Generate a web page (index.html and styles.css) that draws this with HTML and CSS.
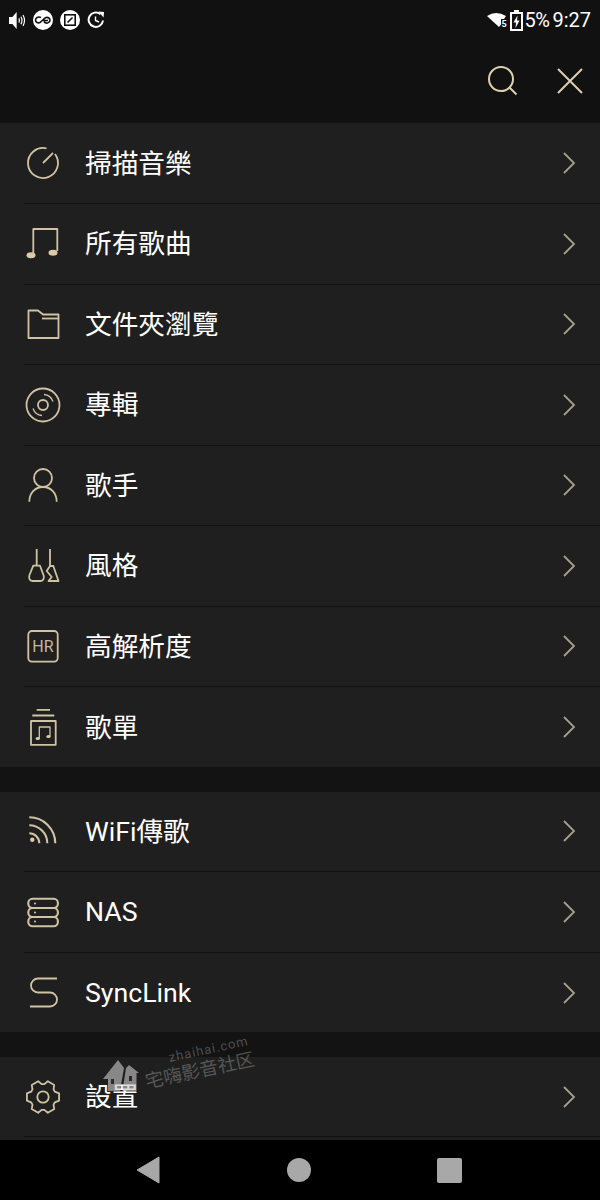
FILE: index.html
```html
<!DOCTYPE html>
<html>
<head>
    <title>Menu</title>
    <link rel="stylesheet" href="styles.css">
</head>
<body>
    <svg class="defs" width="0" height="0">
        <symbol id="chevron" viewBox="0 0 14 24">
            <path d="M2 2 L12 12 L2 22"/>
        </symbol>
    </svg>

    <header class="top">
        <div class="status">
            <div class="status-left">
                <!-- speaker -->
                <svg width="17" height="19" viewBox="0 0 20 22">
                    <path class="solid" d="M0 7 H4 L9 1 V21 L4 15 H0 Z"/>
                    <path class="white-line" d="M11.5 8.5 Q13 11 11.5 13.5 M14 6.5 Q16.5 11 14 15.5 M16.5 4.5 Q20 11 16.5 17.5"/>
                </svg>
                <!-- voicemail badge -->
                <svg width="20" height="20" viewBox="0 0 20 20">
                    <circle class="solid" cx="10" cy="10" r="10"/>
                    <path class="dark-line" d="M8 7.5 C5 6 2.5 8 2.5 10 C2.5 12.5 5 13.5 7 12.5 C9 11.5 10.5 8.5 13 7.5 C15 7 17 8.5 17 10 C17 12 15 13.5 13 13 C11.5 12.5 11 11.5 11 10.5 H15"/>
                </svg>
                <!-- nfc badge -->
                <svg width="20" height="20" viewBox="0 0 20 20">
                    <circle class="solid" cx="10" cy="10" r="10"/>
                    <rect class="dark-line" x="4.8" y="4.8" width="10.4" height="10.4"/>
                    <path class="dark-line" d="M7.5 12.5 L12.5 7.5" stroke-width="2.6"/>
                </svg>
                <!-- clock with arrow -->
                <svg width="18" height="18" viewBox="0 0 18 18">
                    <path class="white-line thick" d="M13.5 3.2 A7.2 7.2 0 1 0 16 9.5"/>
                    <path class="solid" d="M11.5 0.5 L17 1 L16.5 6.5 Z"/>
                    <path class="white-line" d="M8.5 5.5 V9.5 L12 11"/>
                </svg>
            </div>
            <div class="status-right">
                <svg width="21" height="18" viewBox="0 0 21 18">
                    <path class="solid" d="M0 5 Q9 -1 19 5 L17 8 H14 V13.5 L12 16 Z"/>
                    <text class="wifi-five" x="14.5" y="15.5">5</text>
                </svg>
                <svg width="13" height="21" viewBox="0 0 13 21">
                    <path class="white-line thick" d="M1 3 H12 V20 H1 Z"/>
                    <rect class="solid" x="4" y="0" width="5" height="3"/>
                    <path class="solid" d="M7.5 5.5 L3.5 12.5 H6 L5.5 18 L9.5 10.5 H7 Z"/>
                </svg>
                <span class="battery-text">5%</span>
                <span class="clock">9:27</span>
            </div>
        </div>
        <div class="toolbar">
            <svg class="tool-icon" width="30" height="30" viewBox="0 0 30 30">
                <circle cx="13" cy="13" r="12"/>
                <path d="M21.5 21.5 L28.5 28.5"/>
            </svg>
            <svg class="tool-icon" width="28" height="28" viewBox="0 0 28 28">
                <path d="M2 2 L26 26 M26 2 L2 26"/>
            </svg>
        </div>
    </header>

    <main>
        <section class="list list-main">
            <div class="row">
                <svg class="icon" viewBox="0 0 40 40">
                    <path d="M23.5 5.4 A15 15 0 1 0 32 11"/>
                    <path d="M20 20 L30 10"/>
                </svg>
                <span class="label">掃描音樂</span>
                <svg class="chevron"><use href="#chevron"/></svg>
            </div>
            <div class="row">
                <svg class="icon" viewBox="0 0 40 40">
                    <path d="M10.3 29 V5 H34.3 V27"/>
                    <ellipse class="fill" cx="8" cy="31.3" rx="4.5" ry="3"/>
                    <ellipse class="fill" cx="30" cy="28.7" rx="4.5" ry="3"/>
                </svg>
                <span class="label">所有歌曲</span>
                <svg class="chevron"><use href="#chevron"/></svg>
            </div>
            <div class="row">
                <svg class="icon" viewBox="0 0 40 40">
                    <path d="M5.5 6.5 H15 L20 10.5 H35.5 V34 H5.5 Z"/>
                    <path d="M19 14.5 H35.5"/>
                </svg>
                <span class="label">文件夾瀏覽</span>
                <svg class="chevron"><use href="#chevron"/></svg>
            </div>
            <div class="row">
                <svg class="icon" viewBox="0 0 40 40">
                    <circle cx="20" cy="20" r="16.5"/>
                    <circle cx="20" cy="20" r="5"/>
                    <path class="thin" d="M21 9.5 A10.5 10.5 0 0 1 30 16.5"/>
                    <path class="thin" d="M19 30.5 A10.5 10.5 0 0 1 10 23.5"/>
                </svg>
                <span class="label">專輯</span>
                <svg class="chevron"><use href="#chevron"/></svg>
            </div>
            <div class="row">
                <svg class="icon" viewBox="0 0 40 40">
                    <circle cx="20" cy="13" r="9"/>
                    <path d="M6.3 36.7 C6.3 28 12 22 20 22 S33.7 28 33.7 36.7"/>
                </svg>
                <span class="label">歌手</span>
                <svg class="chevron"><use href="#chevron"/></svg>
            </div>
            <div class="row">
                <svg class="icon" viewBox="0 0 40 40">
                    <path d="M13.7 3 V19.7 M10.3 19.7 H17 L20.5 29 C21.5 32 20.5 35 17.5 35 H9.5 C6.5 35 5.5 32 6.5 29 Z"/>
                    <path d="M27 3 V20 L23.7 25 L28.7 31 L25.5 35 H35.5 L30.3 20 H27"/>
                </svg>
                <span class="label">風格</span>
                <svg class="chevron"><use href="#chevron"/></svg>
            </div>
            <div class="row">
                <svg class="icon" viewBox="0 0 40 40">
                    <rect x="5.3" y="5" width="29.4" height="30.6" rx="3.5"/>
                    <text class="icon-text" x="20" y="26">HR</text>
                </svg>
                <span class="label">高解析度</span>
                <svg class="chevron"><use href="#chevron"/></svg>
            </div>
            <div class="row">
                <svg class="icon" viewBox="0 0 40 40">
                    <path d="M13.7 2.8 H27 M9.3 8.5 H31.3"/>
                    <rect x="8" y="14" width="24.7" height="23.8"/>
                    <path class="thin" d="M16.3 31 V20 H27 V29"/>
                    <ellipse class="fill" cx="14.8" cy="31.5" rx="2.2" ry="1.5"/>
                    <ellipse class="fill" cx="25.5" cy="29.5" rx="2.2" ry="1.5"/>
                </svg>
                <span class="label">歌單</span>
                <svg class="chevron"><use href="#chevron"/></svg>
            </div>
        </section>

        <section class="list list-mid">
            <div class="row">
                <svg class="icon heavy" viewBox="0 0 40 40">
                    <path d="M6.3 6.3 A26 26 0 0 1 32.3 32.3"/>
                    <path d="M6.3 14.3 A18 18 0 0 1 24.3 32.3"/>
                    <path d="M6.3 22.3 A10 10 0 0 1 16.3 32.3"/>
                    <circle class="fill" cx="9.3" cy="28.7" r="2.2"/>
                </svg>
                <span class="label">WiFi傳歌</span>
                <svg class="chevron"><use href="#chevron"/></svg>
            </div>
            <div class="row">
                <svg class="icon heavy" viewBox="0 0 40 40">
                    <rect x="5.3" y="6.8" width="29.6" height="9.2" rx="4.2"/>
                    <rect x="5.3" y="16" width="29.6" height="9" rx="4.2"/>
                    <rect x="5.3" y="25" width="29.6" height="9.2" rx="4.2"/>
                    <circle class="fill" cx="12" cy="11.4" r="1"/>
                    <circle class="fill" cx="12" cy="20.5" r="1"/>
                    <circle class="fill" cx="12" cy="29.6" r="1"/>
                </svg>
                <span class="label">NAS</span>
                <svg class="chevron"><use href="#chevron"/></svg>
            </div>
            <div class="row">
                <svg class="icon" viewBox="0 0 40 40">
                    <path d="M34 5.5 H15 a7 7 0 0 0 0 14 H27 a7 7 0 0 1 0 14 H7"/>
                </svg>
                <span class="label">SyncLink</span>
                <svg class="chevron"><use href="#chevron"/></svg>
            </div>
        </section>

        <section class="list list-end">
            <div class="row">
                <svg class="icon" viewBox="0 0 40 40">
                    <path d="M31.88 14.71 L36.08 16.29 L36.08 23.71 L31.88 25.29 L30.52 27.64 L31.25 32.07 L24.82 35.78 L21.36 32.93 L18.64 32.93 L15.18 35.78 L8.75 32.07 L9.48 27.64 L8.12 25.29 L3.92 23.71 L3.92 16.29 L8.12 14.71 L9.48 12.36 L8.75 7.93 L15.18 4.22 L18.64 7.07 L21.36 7.07 L24.82 4.22 L31.25 7.93 L30.52 12.36 Z"/>
                    <circle cx="20" cy="20" r="5.7"/>
                </svg>
                <span class="label">設置</span>
                <svg class="chevron"><use href="#chevron"/></svg>
            </div>
        </section>
    </main>

    <nav class="navbar">
        <svg width="24" height="28" viewBox="0 0 24 28">
            <path class="nav-shape" d="M23 1 V27 L1 14 Z"/>
        </svg>
        <span class="nav-circle"></span>
        <span class="nav-square"></span>
    </nav>

    <!-- watermark over the list -->
    <div class="watermark">
        <svg class="watermark-logo" width="38" height="32" viewBox="0 0 38 32">
            <path d="M1 19 L16 0 L22 8 L18 31 H6 V19 Z"/>
            <path d="M20.5 31 L24 8 L27 5 L37 13 H34.5 V31 Z"/>
            <rect class="watermark-hole" x="9" y="19" width="3" height="5"/>
            <rect class="watermark-hole" x="27" y="16" width="3" height="5"/>
        </svg>
        <div class="watermark-text">
            <div class="watermark-url">zhaihai.com</div>
            <div class="watermark-name">宅嗨影音社区</div>
        </div>
    </div>
</body>
</html>
```

FILE: styles.css
```css
* {
    box-sizing: border-box;
}
html, body {
    margin: 0;
    padding: 0;
}
body {
    position: relative;
    width: 600px;
    height: 1200px;
    overflow: hidden;
    background-color: #131313;
    color: white;
    font-family: Roboto, "Noto Sans CJK TC", sans-serif;
}
.defs {
    position: absolute;
}

/* top area */
.top {
    height: 123px;
    background-color: #111111;
}
.status {
    height: 40px;
    display: flex;
    justify-content: space-between;
    align-items: center;
    padding: 0 9px;
}
.status-left {
    display: flex;
    align-items: center;
    gap: 7px;
}
.status-right {
    display: flex;
    align-items: center;
    gap: 2px;
    font-size: 20px;
    line-height: 24px;
}
.battery-text {
    letter-spacing: -0.5px;
}
.clock {
    margin-left: 1px;
}
.solid {
    fill: white;
}
.white-line {
    fill: none;
    stroke: white;
    stroke-width: 1.4;
}
.white-line.thick {
    stroke-width: 2;
}
.dark-line {
    fill: none;
    stroke: #111111;
    stroke-width: 1.6;
}
.wifi-five {
    fill: white;
    font-size: 9px;
    font-weight: 700;
}
.toolbar {
    height: 83px;
    display: flex;
    justify-content: flex-end;
    align-items: center;
    gap: 38px;
    padding: 0 16px 1px 0;
}
.tool-icon {
    fill: none;
    stroke: #ddd0ae;
    stroke-width: 2;
}

/* lists */
.list {
    background-color: #1f1f1f;
}
.list-main {
    height: 644px;
    padding-top: 0.5px;
    margin-bottom: 24.5px;
}
.list-mid {
    height: 240.5px;
    margin-bottom: 25px;
}
.list-end {
    height: 83px;
}
.row {
    height: 80.5px;
    margin-left: 24px;
    padding-right: 24px;
    display: flex;
    align-items: center;
    border-bottom: 1px solid #111111;
}
.list .row:last-child {
    border-bottom: none;
}
.list-end .row:last-child {
    height: 80px;
    border-bottom: 1px solid #111111;
}
.icon {
    width: 40px;
    height: 40px;
    margin-left: -1px;
    flex-shrink: 0;
    fill: none;
    stroke: #d0c3a3;
    stroke-width: 1.8;
    stroke-linejoin: round;
}
.icon.heavy {
    stroke-width: 2.1;
}
.icon .thin {
    stroke-width: 1.3;
}
.icon .fill {
    fill: #dccba6;
    stroke: none;
}
.icon-text {
    fill: #c5b99c;
    stroke: none;
    font-size: 16px;
    text-anchor: middle;
}
.label {
    margin-left: 22px;
    padding-top: 1px;
    flex: 1;
    font-size: 26.7px;
    line-height: 36px;
}
.chevron {
    width: 14px;
    height: 24px;
    fill: none;
    stroke: #a89f8b;
    stroke-width: 1.8;
}

/* android nav */
.navbar {
    height: 60px;
    background-color: black;
    display: flex;
    align-items: center;
    justify-content: space-between;
    padding: 0 138px 0 136px;
}
.nav-shape {
    fill: #a8a8a8;
    stroke: #a8a8a8;
    stroke-linejoin: round;
}
.nav-circle {
    width: 24px;
    height: 24px;
    border-radius: 50%;
    background-color: #a8a8a8;
}
.nav-square {
    width: 25px;
    height: 25px;
    border-radius: 2px;
    background-color: #a8a8a8;
}

/* watermark */
.watermark {
    position: absolute;
    left: 102px;
    top: 1060px;
    display: flex;
}
.watermark-logo {
    fill: rgba(200, 200, 200, 0.62);
}
.watermark-hole {
    fill: #2a2a2a;
}
.watermark-text {
    position: absolute;
    left: 37px;
    top: -16px;
    width: 118px;
    transform: rotate(-12deg);
    text-align: center;
    color: rgba(255, 255, 255, 0.25);
    white-space: nowrap;
}
.watermark-url {
    padding-left: 26px;
    font-size: 13px;
    line-height: 15px;
    letter-spacing: 1px;
}
.watermark-name {
    font-size: 18.5px;
    line-height: 21px;
    font-family: "Noto Sans CJK SC", sans-serif;
}
```
